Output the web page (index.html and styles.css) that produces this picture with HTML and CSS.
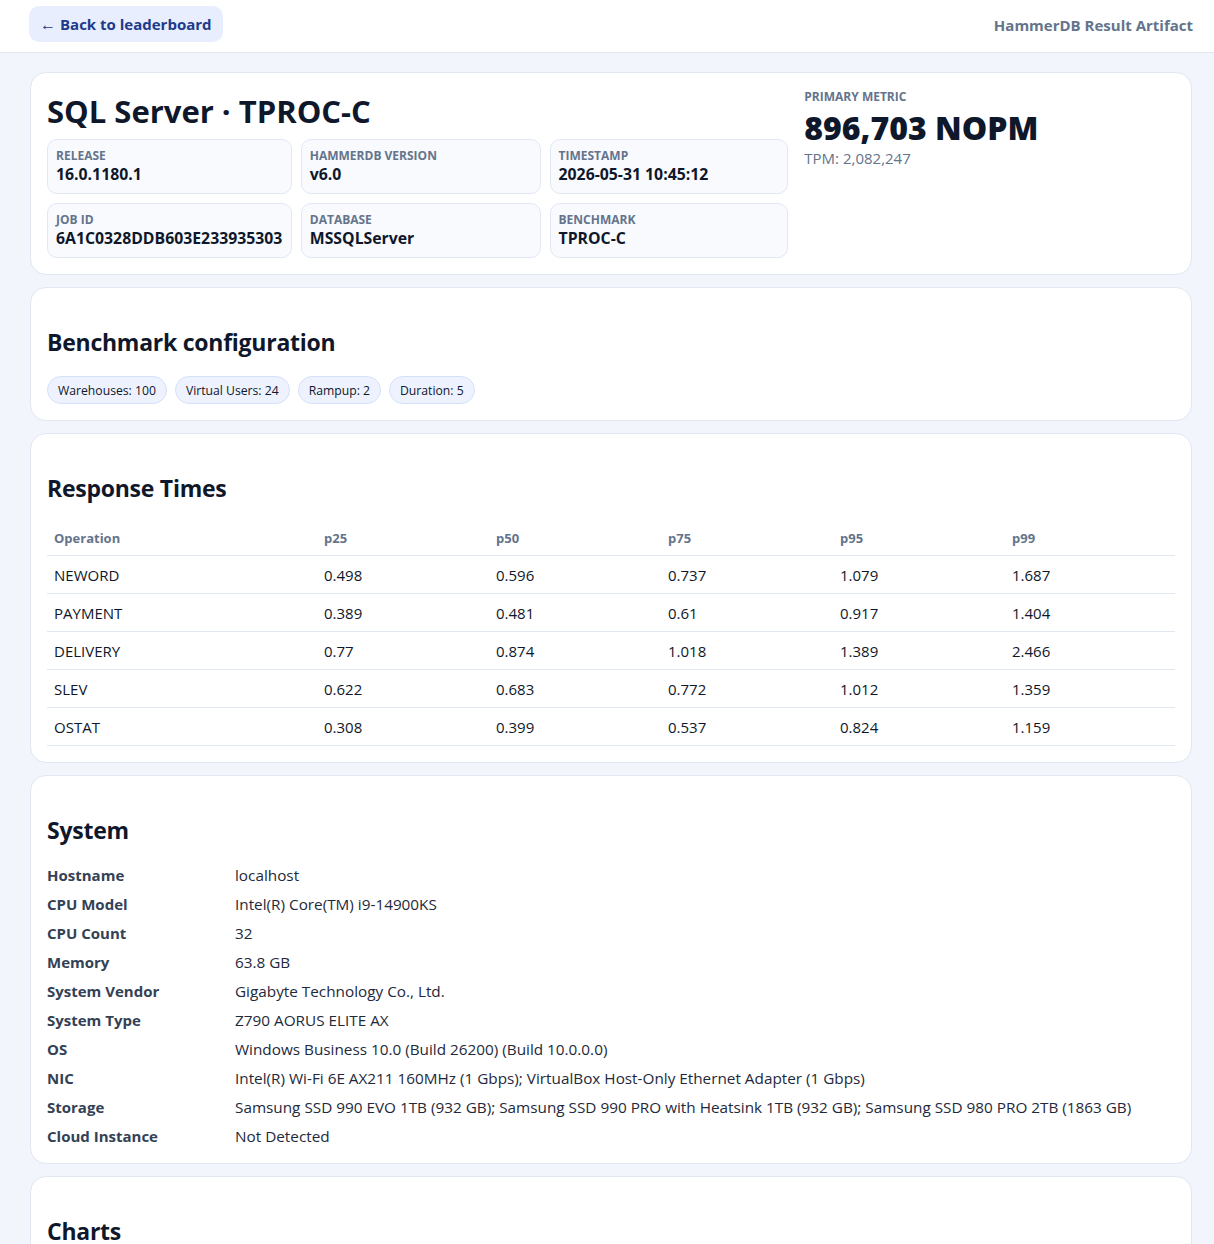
FILE: index.html
```html
<!DOCTYPE html>
<html lang="en">
<head>
<meta charset="utf-8">
<title>HammerDB Result Artifact</title>
<link rel="stylesheet" href="styles.css">
</head>
<body>
<header class="topbar">
  <a class="back-btn" href="#"><span class="arrow">←</span> Back to leaderboard</a>
  <div class="brand">HammerDB Result Artifact</div>
</header>
<main class="page">
  <section class="card hero">
    <div class="hero-main">
      <h1 class="title">SQL Server · TPROC-C</h1>
      <div class="facts">
        <div class="fact"><div class="fact-label">Release</div><div class="fact-value">16.0.1180.1</div></div>
        <div class="fact"><div class="fact-label">HammerDB Version</div><div class="fact-value">v6.0</div></div>
        <div class="fact"><div class="fact-label">Timestamp</div><div class="fact-value">2026-05-31 10:45:12</div></div>
        <div class="fact"><div class="fact-label">Job ID</div><div class="fact-value">6A1C0328DDB603E233935303</div></div>
        <div class="fact"><div class="fact-label">Database</div><div class="fact-value">MSSQLServer</div></div>
        <div class="fact"><div class="fact-label">Benchmark</div><div class="fact-value">TPROC-C</div></div>
      </div>
    </div>
    <div class="metric">
      <div class="metric-label">Primary Metric</div>
      <div class="metric-value">896,703 NOPM</div>
      <div class="metric-sub">TPM: 2,082,247</div>
    </div>
  </section>

  <section class="card">
    <h2 class="section-title">Benchmark configuration</h2>
    <div class="chips">
      <span class="chip">Warehouses: 100</span>
      <span class="chip">Virtual Users: 24</span>
      <span class="chip">Rampup: 2</span>
      <span class="chip">Duration: 5</span>
    </div>
  </section>

  <section class="card">
    <h2 class="section-title">Response Times</h2>
    <table class="rt">
      <colgroup>
        <col class="c-op"><col class="c-n"><col class="c-n"><col class="c-n"><col class="c-n"><col>
      </colgroup>
      <thead>
        <tr><th>Operation</th><th>p25</th><th>p50</th><th>p75</th><th>p95</th><th>p99</th></tr>
      </thead>
      <tbody>
        <tr><td>NEWORD</td><td>0.498</td><td>0.596</td><td>0.737</td><td>1.079</td><td>1.687</td></tr>
        <tr><td>PAYMENT</td><td>0.389</td><td>0.481</td><td>0.61</td><td>0.917</td><td>1.404</td></tr>
        <tr><td>DELIVERY</td><td>0.77</td><td>0.874</td><td>1.018</td><td>1.389</td><td>2.466</td></tr>
        <tr><td>SLEV</td><td>0.622</td><td>0.683</td><td>0.772</td><td>1.012</td><td>1.359</td></tr>
        <tr><td>OSTAT</td><td>0.308</td><td>0.399</td><td>0.537</td><td>0.824</td><td>1.159</td></tr>
      </tbody>
    </table>
  </section>

  <section class="card">
    <h2 class="section-title">System</h2>
    <dl class="sys">
      <dt>Hostname</dt><dd>localhost</dd>
      <dt>CPU Model</dt><dd>Intel(R) Core(TM) i9-14900KS</dd>
      <dt>CPU Count</dt><dd>32</dd>
      <dt>Memory</dt><dd>63.8 GB</dd>
      <dt>System Vendor</dt><dd>Gigabyte Technology Co., Ltd.</dd>
      <dt>System Type</dt><dd>Z790 AORUS ELITE AX</dd>
      <dt>OS</dt><dd>Windows Business 10.0 (Build 26200) (Build 10.0.0.0)</dd>
      <dt>NIC</dt><dd>Intel(R) Wi-Fi 6E AX211 160MHz (1 Gbps); VirtualBox Host-Only Ethernet Adapter (1 Gbps)</dd>
      <dt>Storage</dt><dd>Samsung SSD 990 EVO 1TB (932 GB); Samsung SSD 990 PRO with Heatsink 1TB (932 GB); Samsung SSD 980 PRO 2TB (1863 GB)</dd>
      <dt>Cloud Instance</dt><dd>Not Detected</dd>
    </dl>
  </section>

  <section class="card">
    <h2 class="section-title">Charts</h2>
    <div class="chart-space"></div>
  </section>
</main>
</body>
</html>
```
FILE: styles.css
```css
* { box-sizing: border-box; }
html, body { margin: 0; padding: 0; }
body {
  font-family: "Open Sans", "Noto Sans", "Liberation Sans", sans-serif;
  background: #f2f5fc;
  color: #0f172a;
  font-size: 15px;
}
.topbar {
  display: flex;
  align-items: center;
  justify-content: space-between;
  height: 53px;
  padding: 0 21px 0 29px;
  background: #ffffff;
  border-bottom: 1px solid #e1e6f2;
}
.back-btn {
  display: inline-flex;
  align-items: center;
  gap: 4px;
  height: 36px;
  padding: 0 11px 0 11px;
  margin-top: -4px;
  border-radius: 10px;
  background: #e8eefd;
  color: #1e3a8a;
  font-weight: 700;
  font-size: 15px;
  text-decoration: none;
}
.arrow {
  font-weight: 400;
  font-size: 16px;
}
.brand {
  margin-top: -3px;
  color: #64748b;
  font-weight: 700;
  font-size: 15px;
}
.page {
  display: flex;
  flex-direction: column;
  gap: 12px;
  padding: 19px 22px 20px 30px;
}
.card {
  background: #ffffff;
  border: 1px solid #e0e6f2;
  border-radius: 16px;
  padding: 16px;
}
.hero {
  display: grid;
  grid-template-columns: 2fr 1fr;
  gap: 16px;
}
.title {
  margin: 0 0 6px;
  font-size: 31px;
  line-height: 44px;
  font-weight: 700;
  color: #0f172a;
}
.facts {
  display: grid;
  grid-template-columns: 245fr 240fr 239fr;
  gap: 9px;
}
.fact {
  background: #f8fafe;
  border: 1px solid #e2e8f3;
  border-radius: 10px;
  padding: 8px;
}
.fact-label {
  font-size: 12px;
  line-height: 16px;
  font-weight: 700;
  color: #64748b;
  text-transform: uppercase;
}
.fact-value {
  font-size: 15.8px;
  line-height: 21px;
  font-weight: 700;
  color: #0f172a;
}
.metric-label {
  font-size: 12px;
  line-height: 16px;
  font-weight: 700;
  color: #64748b;
  text-transform: uppercase;
}
.metric-value {
  margin-top: 3px;
  font-size: 32px;
  line-height: 40px;
  font-weight: 800;
  color: #0f172a;
}
.metric-sub {
  font-size: 15px;
  line-height: 20px;
  color: #64748b;
}
.section-title {
  margin: 22px 0 18px;
  font-size: 23px;
  letter-spacing: -0.25px;
  line-height: 32px;
  font-weight: 700;
  color: #0f172a;
}
.chips {
  display: flex;
  flex-wrap: wrap;
  gap: 8px;
}
.chip {
  display: inline-flex;
  align-items: center;
  height: 28px;
  padding: 0 10px;
  border-radius: 999px;
  background: #edf2fe;
  border: 1px solid #d5e1fa;
  font-size: 12.2px;
  color: #0f172a;
}
.rt {
  width: 100%;
  border-collapse: collapse;
  table-layout: fixed;
}
.c-op { width: 270px; }
.c-n { width: 172px; }
.rt th {
  text-align: left;
  font-size: 13px;
  line-height: 17px;
  font-weight: 700;
  color: #64748b;
  padding: 8px 7px;
  border-bottom: 1px solid #e2e8f3;
}
.rt td {
  text-align: left;
  font-size: 15px;
  line-height: 22px;
  padding: 8px 7px 7px;
  color: #0f172a;
  border-bottom: 1px solid #e2e8f3;
}
.sys {
  display: grid;
  grid-template-columns: 188px 1fr;
  row-gap: 7px;
  margin: 0;
}
.sys dt {
  font-weight: 700;
  color: #334155;
  line-height: 22px;
}
.sys dd {
  margin: 0;
  font-size: 15.3px;
  line-height: 22px;
  color: #1e293b;
}
.chart-space { height: 200px; }
```
